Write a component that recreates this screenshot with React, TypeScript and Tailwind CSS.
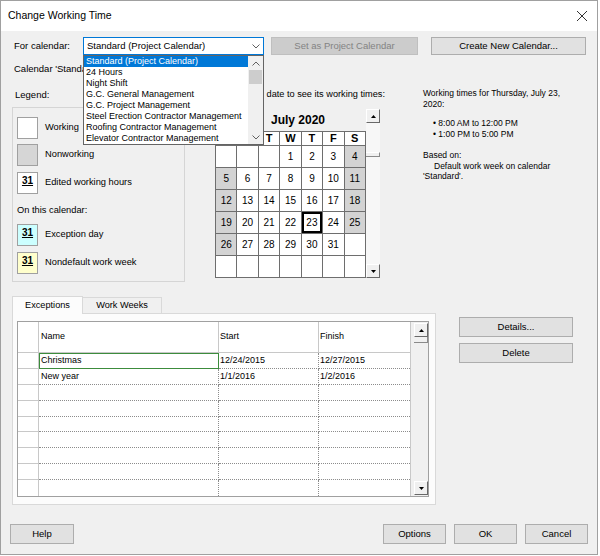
import React from 'react';

const calendars = [
  'Standard (Project Calendar)',
  '24 Hours',
  'Night Shift',
  'G.C. General Management',
  'G.C. Project Management',
  'Steel Erection Contractor Management',
  'Roofing Contractor Management',
  'Elevator Contractor Management',
];

const weeks: (number | null)[][] = [
  [null, null, null, 1, 2, 3, 4],
  [5, 6, 7, 8, 9, 10, 11],
  [12, 13, 14, 15, 16, 17, 18],
  [19, 20, 21, 22, 23, 24, 25],
  [26, 27, 28, 29, 30, 31, null],
  [null, null, null, null, null, null, null],
];

const exceptions = [
  { name: 'Christmas', start: '12/24/2015', finish: '12/27/2015' },
  { name: 'New year', start: '1/1/2016', finish: '1/2/2016' },
];

function Chevron({ up }: { up?: boolean }) {
  return (
    <svg width="8" height="5" viewBox="0 0 8 5">
      <polyline
        points={up ? '0.5,4.5 4,1 7.5,4.5' : '0.5,0.5 4,4 7.5,0.5'}
        fill="none"
        stroke="#606060"
        strokeWidth="1"
      />
    </svg>
  );
}

// classic 3d scroll button with a tiny filled arrow
function ScrollButton({ up }: { up?: boolean }) {
  return (
    <div className="w-[14px] h-[14px] bg-[#f0f0f0] border border-t-white border-l-white border-r-[#696969] border-b-[#696969] flex items-center justify-center">
      <svg width="5" height="3" viewBox="0 0 5 3">
        <polygon points={up ? '0,3 2.5,0 5,3' : '0,0 5,0 2.5,3'} fill="#000" />
      </svg>
    </div>
  );
}

function Button({ label, className = '', disabled }: { label: string; className?: string; disabled?: boolean }) {
  return (
    <div
      className={
        'flex items-center justify-center border text-[9.5px] ' +
        (disabled ? 'bg-[#cccccc] border-[#bfbfbf] text-[#838383] ' : 'bg-[#e1e1e1] border-[#adadad] text-black ') +
        className
      }
    >
      {label}
    </div>
  );
}

function Swatch({ bg, num }: { bg: string; num?: boolean }) {
  return (
    <div className={'w-[21px] h-[22px] border border-[#a0a0a0] flex justify-center pt-[3px] ' + bg}>
      {num && <span className="text-[10px] font-bold underline leading-none">31</span>}
    </div>
  );
}

export default function App() {
  return (
    <div className="w-[600px] h-[556px] bg-white font-['Liberation_Sans',Arial,sans-serif] text-black">
      <div className="w-[598px] h-[555px] border border-[#a0a0a0] bg-[#f0f0f0] flex flex-col">
        {/* title bar */}
        <div className="h-[30px] bg-white flex items-center justify-between pl-[7px] pr-[10px]">
          <span className="text-[10.5px]">Change Working Time</span>
          <svg width="10" height="10" viewBox="0 0 10 10">
            <path d="M0 0L10 10M10 0L0 10" stroke="#333" strokeWidth="1" />
          </svg>
        </div>

        {/* calendar picker row */}
        <div className="mt-[6px] h-[18px] flex items-center pl-[13px] text-[9.5px]">
          <div className="w-[69px]">For calendar:</div>
          <div className="relative w-[181px] h-[18px] border border-[#0078d7] bg-white flex items-center">
            <span className="flex-1 pl-[3px]">Standard (Project Calendar)</span>
            <div className="w-[15px] flex justify-center">
              <Chevron />
            </div>
            <div className="absolute left-[-1px] top-[17px] z-10 w-[181px] h-[90px] border border-[#646464] bg-white flex">
              <div className="flex-1 flex flex-col">
                {calendars.map((c, i) => (
                  <div
                    key={c}
                    className={
                      'h-[11px] leading-[11px] text-[9px] pl-[2px] whitespace-nowrap ' +
                      (i === 0 ? 'bg-[#0078d7] text-white' : '')
                    }
                  >
                    {c}
                  </div>
                ))}
              </div>
              <div className="w-[15px] bg-[#f0f0f0] flex flex-col">
                <div className="h-[14px] flex items-center justify-center">
                  <Chevron up />
                </div>
                <div className="h-[14px] mx-[1px] bg-[#cdcdcd]" />
                <div className="flex-1" />
                <div className="h-[14px] flex items-center justify-center">
                  <Chevron />
                </div>
              </div>
            </div>
          </div>
          <Button label="Set as Project Calendar" disabled className="ml-[7px] w-[147px] h-[18px]" />
          <Button label="Create New Calendar..." className="ml-[13px] w-[155px] h-[18px]" />
        </div>

        {/* the open list hides the rest of this line */}
        <div className="mt-[8px] ml-[13px] w-[69px] overflow-hidden text-[9.5px] leading-[11px] whitespace-nowrap">
          Calendar 'Standard' is a base calendar.
        </div>

        {/* legend / month / details */}
        <div className="mt-[14px] flex">
          <div className="ml-[11px] w-[173px] flex flex-col">
            <div className="mt-[1px] pl-[3px] h-[11px] leading-[11px] text-[9.5px]">Legend:</div>
            <div className="mt-[7px] h-[175px] border border-[#d5d5d5] pt-[9px] pl-[4px] flex flex-col text-[9.3px]">
              <div className="flex items-center">
                <Swatch bg="bg-white" />
                <span className="ml-[7px]">Working</span>
              </div>
              <div className="mt-[5px] flex items-center">
                <Swatch bg="bg-[#d6d6d6]" />
                <span className="ml-[7px]">Nonworking</span>
              </div>
              <div className="mt-[6px] flex items-center">
                <Swatch bg="bg-white" num />
                <span className="ml-[7px]">Edited working hours</span>
              </div>
              <div className="mt-[11px] h-[11px] leading-[11px]">On this calendar:</div>
              <div className="mt-[8px] flex items-center">
                <Swatch bg="bg-[#ccffff]" num />
                <span className="ml-[7px]">Exception day</span>
              </div>
              <div className="mt-[6px] flex items-center">
                <Swatch bg="bg-[#ffffcc]" num />
                <span className="ml-[7px]">Nondefault work week</span>
              </div>
            </div>
          </div>

          <div className="ml-[30px] w-[165px] flex flex-col">
            <div className="mt-[1px] ml-[50px] w-[120px] h-[11px] overflow-hidden flex justify-end">
              <span className="leading-[11px] text-[9.2px] whitespace-nowrap">Click on a date to see its working times:</span>
            </div>
            <div className="mt-[9px] flex">
              <div className="w-[151px] flex flex-col">
                <div className="h-[22px] flex items-center justify-center pl-[15px] text-[12px] font-bold">
                  July 2020
                </div>
                <div className="grid grid-cols-7 gap-px bg-[#6e6e6e] border border-[#6e6e6e]">
                  {['S', 'M', 'T', 'W', 'T', 'F', 'S'].map((d, i) => (
                    <div key={i} className="h-[13px] bg-white flex items-center justify-center text-[11px] font-bold">
                      {d}
                    </div>
                  ))}
                  {weeks.flat().map((d, i) => {
                    const weekend = d !== null && (i % 7 === 0 || i % 7 === 6);
                    return (
                      <div
                        key={i}
                        className={
                          'h-[21px] flex items-center justify-center text-[10px] ' +
                          (weekend ? 'bg-[#d3d3d3] ' : 'bg-white ') +
                          (d === 23 ? 'shadow-[inset_0_0_0_2px_#000]' : '')
                        }
                      >
                        {d}
                      </div>
                    );
                  })}
                </div>
              </div>
              <div className="w-[14px] flex flex-col">
                <ScrollButton up />
                <div className="flex-1 bg-[#f7f7f7] flex flex-col">
                  <div className="mt-[29px] h-[5px] border-t border-r border-b border-r-[#8a8a8a] border-b-[#8a8a8a] border-t-white bg-[#f0f0f0]" />
                </div>
                <ScrollButton />
              </div>
            </div>
          </div>

          <div className="ml-[43px] flex flex-col text-[8.5px] leading-[10.5px]">
            <div>
              Working times for Thursday, July 23,
              <br />
              2020:
            </div>
            <div className="mt-[9px] pl-[10px]">
              <div>• 8:00 AM to 12:00 PM</div>
              <div>• 1:00 PM to 5:00 PM</div>
            </div>
            <div className="mt-[11px]">Based on:</div>
            <div className="pl-[11px]">Default work week on calendar</div>
            <div>'Standard'.</div>
          </div>
        </div>

        {/* tabs */}
        <div className="mt-[14px] ml-[11px] h-[17px] flex items-end text-[9.2px]">
          <div className="relative z-10 -mb-px w-[71px] h-[18px] border border-b-0 border-[#d9d9d9] bg-[#fcfcfc] flex items-center justify-center">
            Exceptions
          </div>
          <div className="w-[79px] h-[16px] border border-l-0 border-b-0 border-[#d9d9d9] bg-[#f0f0f0] flex items-center justify-center">
            Work Weeks
          </div>
        </div>
        <div className="flex">
          <div className="ml-[11px] w-[424px] h-[192px] border border-[#d9d9d9] bg-[#fcfcfc] pt-[7px] pl-[4px]">
            <div className="w-[412px] h-[176px] border border-[#a0a0a0] bg-white flex text-[9px]">
              <div className="flex flex-col">
                <div className="h-[31px] flex border-b border-[#c8c8c8]">
                  <div className="w-[21px] border-r border-[#c8c8c8]" />
                  <div className="w-[180px] border-r border-[#c8c8c8] pl-[2px] flex items-center">Name</div>
                  <div className="w-[100px] border-r border-[#c8c8c8] pl-[1px] flex items-center">Start</div>
                  <div className="w-[91px] pl-[1px] flex items-center">Finish</div>
                </div>
                {Array.from({ length: 9 }).map((_, r) => {
                  const e = exceptions[r];
                  return (
                    <div key={r} className="h-[16px] flex">
                      <div className={'w-[21px] border-r border-[#c8c8c8] ' + (r < 8 ? 'border-b' : '')} />
                      <div
                        className={
                          'w-[180px] border-r border-dotted border-r-[#8c8c8c] border-b-[#8c8c8c] pl-[2px] leading-[15px] ' +
                          (r < 8 ? 'border-b ' : '') +
                          (r === 0 ? 'outline outline-1 outline-[#3c8c3c] -outline-offset-1' : '')
                        }
                      >
                        {e?.name}
                      </div>
                      <div
                        className={
                          'w-[100px] border-r border-dotted border-[#8c8c8c] pl-[1px] leading-[15px] ' +
                          (r < 8 ? 'border-b' : '')
                        }
                      >
                        {e?.start}
                      </div>
                      <div
                        className={
                          'w-[91px] border-dotted border-[#8c8c8c] pl-[1px] leading-[15px] ' + (r < 8 ? 'border-b' : '')
                        }
                      >
                        {e?.finish}
                      </div>
                    </div>
                  );
                })}
              </div>
              <div className="flex-1 border-l border-[#c8c8c8] bg-[#f0f0f0] flex flex-col pl-[3px] pt-[1px] pb-[1px]">
                <ScrollButton up />
                <div className="h-[6px] w-[14px] border-r border-b border-r-[#8a8a8a] border-b-[#8a8a8a]" />
                <div className="flex-1" />
                <ScrollButton />
              </div>
            </div>
          </div>
          <div className="ml-[23px] pt-[4px] flex flex-col">
            <Button label="Details..." className="w-[114px] h-[20px]" />
            <Button label="Delete" className="mt-[6px] w-[114px] h-[20px]" />
          </div>
        </div>

        {/* dialog buttons */}
        <div className="mt-[19px] flex pl-[9px] pr-[9px]">
          <Button label="Help" className="w-[64px] h-[20px]" />
          <div className="flex-1" />
          <Button label="Options" className="w-[63px] h-[20px]" />
          <Button label="OK" className="ml-[8px] w-[63px] h-[20px]" />
          <Button label="Cancel" className="ml-[8px] w-[63px] h-[20px]" />
        </div>
      </div>
    </div>
  );
}
